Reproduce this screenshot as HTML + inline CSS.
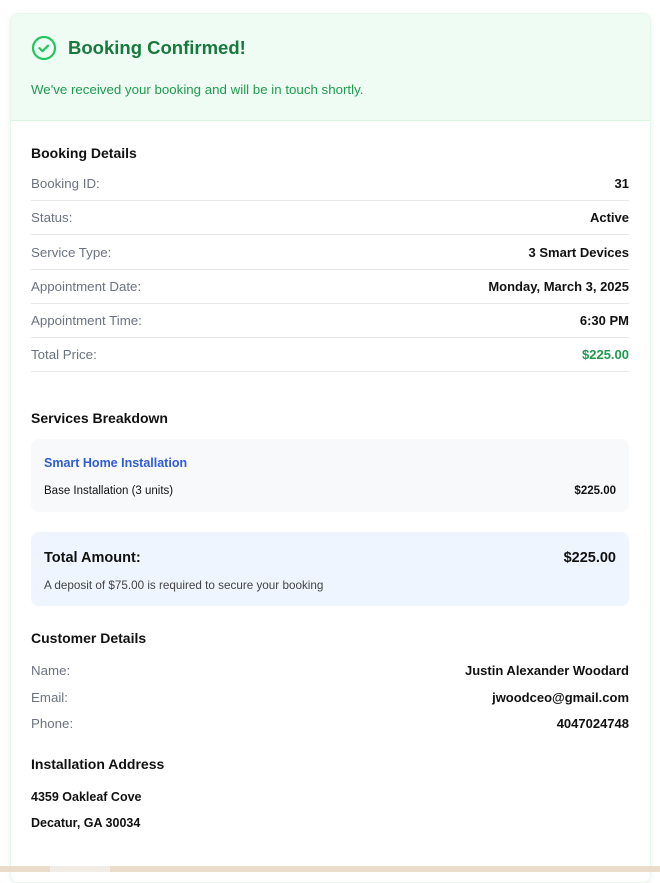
<!DOCTYPE html>
<html><head><style>
*{box-sizing:border-box;margin:0;padding:0}
body{width:660px;height:872px;background:#fff;font-family:"Liberation Sans",sans-serif;color:#111;position:relative;overflow:hidden}
.card{position:absolute;left:10px;top:13px;width:641px;height:870px;border:1px solid #e6f7ec;border-radius:8px;background:#fff;box-shadow:0 1px 6px rgba(0,0,0,.06);overflow:hidden}
.hdr{background:#effcf3;border-bottom:1px solid #d9f5e2;height:107px;padding:0 20px;position:relative}
.hdr h1{position:absolute;left:57px;top:23px;font-size:18.5px;font-weight:bold;color:#177a3c}
.hdr svg{position:absolute;left:20px;top:21px}
.hdr p{position:absolute;left:20px;top:68px;font-size:13.3px;color:#1f9a4f}
h2{position:absolute;left:20px;font-size:14px;font-weight:bold;color:#111}
.row{position:absolute;left:20px;width:598px;height:34px;border-bottom:1px solid #e5e7eb;font-size:13.3px}
.row span{position:absolute;top:9px}
.l{left:0;color:#6b7280}
.v{right:0;font-weight:bold;font-size:13px}
.r2{position:absolute;left:20px;width:598px;font-size:13.3px}
.r2 .l,.r2 .v{position:absolute;top:0}
.box{position:absolute;left:20px;width:598px;border-radius:8px}
</style></head><body>
<div class="card">
<div class="hdr">
<svg width="26" height="26" viewBox="0 0 26 26"><circle cx="13" cy="13" r="11" fill="none" stroke="#22c55e" stroke-width="2.2"/><path d="M8.5 13.2l3 3 5.5-5.5" fill="none" stroke="#22c55e" stroke-width="2.2" stroke-linecap="round" stroke-linejoin="round"/></svg>
<h1>Booking Confirmed!</h1>
<p>We've received your booking and will be in touch shortly.</p>
</div>
<h2 style="top:131px">Booking Details</h2>
<div class="row" style="top:153px"><span class="l">Booking ID:</span><span class="v">31</span></div>
<div class="row" style="top:187px"><span class="l">Status:</span><span class="v">Active</span></div>
<div class="row" style="top:222px"><span class="l">Service Type:</span><span class="v">3 Smart Devices</span></div>
<div class="row" style="top:256px"><span class="l">Appointment Date:</span><span class="v">Monday, March 3, 2025</span></div>
<div class="row" style="top:290px"><span class="l">Appointment Time:</span><span class="v">6:30 PM</span></div>
<div class="row" style="top:324px"><span class="l">Total Price:</span><span class="v" style="color:#1f9a4f">$225.00</span></div>
<h2 style="top:396px">Services Breakdown</h2>
<div class="box" style="top:425px;height:73px;background:#f8f9fb">
<div style="position:absolute;left:13px;top:17px;font-size:12.5px;font-weight:bold;color:#2f5bd3">Smart Home Installation</div>
<div style="position:absolute;left:13px;top:46px;font-size:11.5px">Base Installation (3 units)</div>
<div style="position:absolute;right:13px;top:46px;font-size:11.5px;font-weight:bold">$225.00</div>
</div>
<div class="box" style="top:518px;height:74px;background:#eef5ff">
<div style="position:absolute;left:13px;top:18px;font-size:14.5px;font-weight:bold">Total Amount:</div>
<div style="position:absolute;right:13px;top:18px;font-size:14.5px;font-weight:bold">$225.00</div>
<div style="position:absolute;left:13px;top:47px;font-size:11.7px;color:#444">A deposit of $75.00 is required to secure your booking</div>
</div>
<h2 style="top:616px">Customer Details</h2>
<div class="r2" style="top:649px"><span class="l">Name:</span><span class="v">Justin Alexander Woodard</span></div>
<div class="r2" style="top:676px"><span class="l">Email:</span><span class="v">jwoodceo@gmail.com</span></div>
<div class="r2" style="top:702px"><span class="l">Phone:</span><span class="v">4047024748</span></div>
<h2 style="top:742px">Installation Address</h2>
<div style="position:absolute;left:20px;top:776px;font-size:12.5px;font-weight:bold">4359 Oakleaf Cove</div>
<div style="position:absolute;left:20px;top:802px;font-size:12.5px;font-weight:bold">Decatur, GA 30034</div>
</div>
<div style="position:absolute;left:0;top:866px;width:660px;height:6px;background:#e9dccb"></div>
<div style="position:absolute;left:50px;top:866px;width:60px;height:6px;background:#f2ece6"></div>
</body></html>
